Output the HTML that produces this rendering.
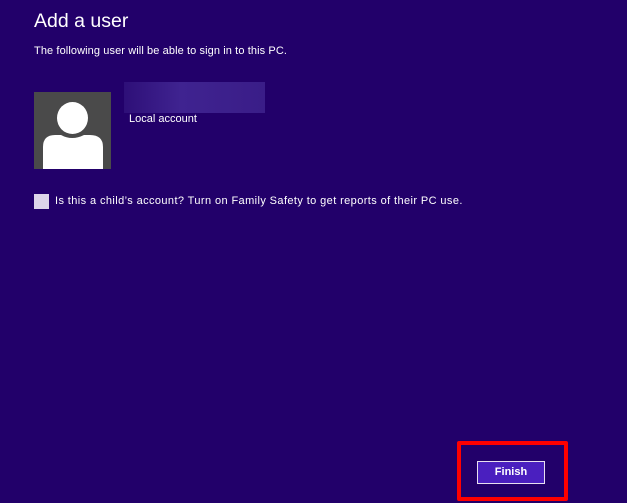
<!DOCTYPE html>
<html><head><style>
body{margin:0;width:627px;height:503px;background:#22006a;font-family:"Segoe UI","Liberation Sans",sans-serif;color:#fff;position:relative;overflow:hidden}
.a{position:absolute;white-space:nowrap}
</style></head><body>
<div class="a" style="left:34px;top:10px;font-size:19.5px;font-weight:300">Add a user</div>
<div class="a" style="left:34px;top:45px;font-size:11px;letter-spacing:0.1px">The following user will be able to sign in to this PC.</div>
<div class="a" style="left:124px;top:82px;width:141px;height:31px;background:linear-gradient(90deg,#2e0f78,#3f2390 40%,#3a1d88)"></div>
<div class="a" style="left:129px;top:113px;font-size:11px">Local account</div>
<svg class="a" style="left:34px;top:92px" width="77" height="77" viewBox="0 0 77 77">
<rect width="77" height="77" fill="#4a4a4a"/>
<ellipse cx="38.5" cy="26" rx="15.5" ry="16" fill="#fff"/>
<path d="M9 77 L9 55 Q9 43 21 43 L27 43 Q38 49 50 43 L56 43 Q69 43 69 55 L69 77 Z" fill="#fff"/>
</svg>
<div class="a" style="left:34px;top:194px;width:15px;height:15px;background:#ddd5ea"></div>
<div class="a" style="left:55px;top:195px;font-size:11px;letter-spacing:0.4px">Is this a child’s account? Turn on Family Safety to get reports of their PC use.</div>
<div class="a" style="left:457px;top:441px;width:103px;height:52px;border:4px solid #f00;border-radius:2px"></div>
<div class="a" style="left:477px;top:461px;width:66px;height:21px;background:#4a1fbf;border:1px solid #e8e0f0;font-size:11px;font-weight:bold;text-align:center;line-height:21px">Finish</div>
</body></html>
